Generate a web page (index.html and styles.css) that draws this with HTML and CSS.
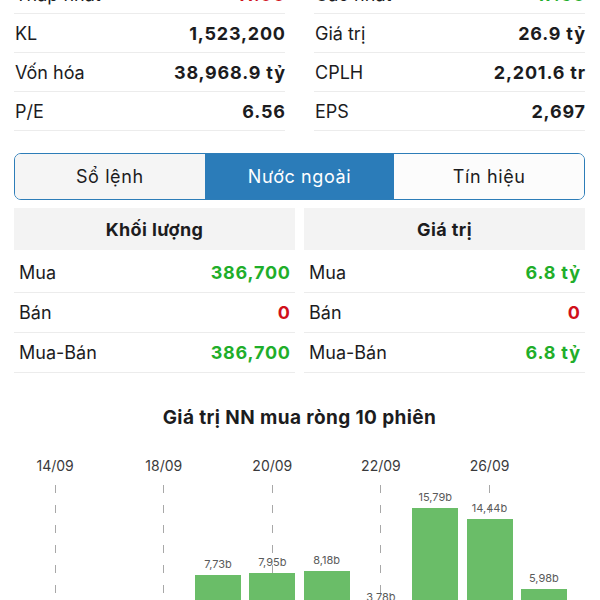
FILE: index.html
```html
<!DOCTYPE html>
<html lang="vi">
<head>
    <meta charset="UTF-8">
    <meta name="viewport" content="width=device-width, initial-scale=1.0">
    <title>Nước ngoài</title>
    <link rel="stylesheet" href="styles.css">
</head>
<body>
    <div class="page">
        <!-- Thống kê phiên -->
        <section class="stats">
            <div class="stats-col">
                <div class="row"><span class="label">Thấp nhất</span><span class="value down">11.90</span></div>
                <div class="row"><span class="label">KL</span><span class="value">1,523,200</span></div>
                <div class="row"><span class="label">Vốn hóa</span><span class="value">38,968.9 tỷ</span></div>
                <div class="row"><span class="label">P/E</span><span class="value">6.56</span></div>
            </div>
            <div class="stats-col">
                <div class="row"><span class="label">Cao nhất</span><span class="value up">17.50</span></div>
                <div class="row"><span class="label">Giá trị</span><span class="value">26.9 tỷ</span></div>
                <div class="row"><span class="label">CPLH</span><span class="value">2,201.6 tr</span></div>
                <div class="row"><span class="label">EPS</span><span class="value">2,697</span></div>
            </div>
        </section>

        <nav class="tabs">
            <a class="tab tab-first" href="#">Sổ lệnh</a>
            <a class="tab active" href="#">Nước ngoài</a>
            <a class="tab" href="#">Tín hiệu</a>
        </nav>

        <!-- Giao dịch nước ngoài -->
        <section class="foreign">
            <div class="foreign-col">
                <div class="foreign-head">Khối lượng</div>
                <div class="frow"><span class="label">Mua</span><span class="value up">386,700</span></div>
                <div class="frow"><span class="label">Bán</span><span class="value down">0</span></div>
                <div class="frow"><span class="label">Mua-Bán</span><span class="value up">386,700</span></div>
            </div>
            <div class="foreign-col">
                <div class="foreign-head">Giá trị</div>
                <div class="frow"><span class="label">Mua</span><span class="value up">6.8 tỷ</span></div>
                <div class="frow"><span class="label">Bán</span><span class="value down">0</span></div>
                <div class="frow"><span class="label">Mua-Bán</span><span class="value up">6.8 tỷ</span></div>
            </div>
        </section>

        <section class="chart">
            <h3 class="chart-title">Giá trị NN mua ròng 10 phiên</h3>
            <div class="chart-body">
                <div class="col"><div class="date">14/09</div><div class="plot lined"><span class="bar-label">1,05b</span><div class="bar" style="height: 9px"></div></div></div>
                <div class="col"><div class="date"></div><div class="plot"><span class="bar-label">0,82b</span><div class="bar" style="height: 7px"></div></div></div>
                <div class="col"><div class="date">18/09</div><div class="plot lined"><span class="bar-label">1,40b</span><div class="bar" style="height: 12px"></div></div></div>
                <div class="col"><div class="date"></div><div class="plot"><span class="bar-label">7,73b</span><div class="bar" style="height: 64px"></div></div></div>
                <div class="col"><div class="date">20/09</div><div class="plot lined"><span class="bar-label">7,95b</span><div class="bar" style="height: 66px"></div></div></div>
                <div class="col"><div class="date"></div><div class="plot"><span class="bar-label">8,18b</span><div class="bar" style="height: 68px"></div></div></div>
                <div class="col"><div class="date">22/09</div><div class="plot lined"><span class="bar-label">3,78b</span><div class="bar" style="height: 31px"></div></div></div>
                <div class="col"><div class="date"></div><div class="plot"><span class="bar-label">15,79b</span><div class="bar" style="height: 131px"></div></div></div>
                <div class="col"><div class="date">26/09</div><div class="plot lined"><span class="bar-label">14,44b</span><div class="bar" style="height: 120px"></div></div></div>
                <div class="col"><div class="date"></div><div class="plot"><span class="bar-label">5,98b</span><div class="bar" style="height: 50px"></div></div></div>
            </div>
        </section>
    </div>
</body>
</html>
```

FILE: styles.css
```css
body {
    margin: 0;
    background: #fff;
    color: #1c1c1e;
    font-family: 'Inter', 'Roboto', sans-serif;
    font-size: 18px;
}

.page {
    margin-top: -25px;
    padding: 0 15px 0 14px;
}

.up {
    color: #1fae2a;
}

.down {
    color: #d0101b;
}

/* stats table */
.stats {
    display: grid;
    grid-template-columns: 1fr 1fr;
    column-gap: 29px;
}

.row {
    display: flex;
    justify-content: space-between;
    align-items: center;
    height: 38px;
    border-bottom: 1px solid #ececec;
}

.label {
    padding-left: 1px;
}

.value {
    font-weight: 700;
    letter-spacing: 0.8px;
    margin-right: -0.8px;
}

.stats .value {
    color: #1c1c1e;
}

.stats .value.up {
    color: #1fae2a;
}

.stats .value.down {
    color: #d0101b;
}

/* tabs */
.tabs {
    display: flex;
    margin-top: 22px;
    height: 45px;
    border: 1px solid #2d7db8;
    border-radius: 7px;
    overflow: hidden;
}

.tab {
    flex: 1;
    display: flex;
    align-items: center;
    justify-content: center;
    color: #1c1c1e;
    text-decoration: none;
    letter-spacing: 0.6px;
    background: #fcfcfc;
}

.tab-first {
    background: #f5f5f5;
}

.tab.active {
    background: #2b7cb9;
    color: #fff;
}

/* foreign trading */
.foreign {
    display: grid;
    grid-template-columns: 1fr 1fr;
    column-gap: 9px;
    margin-top: 8px;
}

.foreign-head {
    height: 42px;
    display: flex;
    align-items: center;
    justify-content: center;
    background: #f3f3f3;
    font-weight: 700;
    letter-spacing: 0.4px;
}

.frow {
    display: flex;
    justify-content: space-between;
    align-items: center;
    height: 39px;
    padding: 0 5px 0 4px;
    border-bottom: 1px solid #ececec;
}

.foreign-head + .frow {
    margin-top: 3px;
}

/* chart */
.chart {
    padding: 0 14px 0 14px;
}

.chart-title {
    margin: 32px 0 0;
    height: 26px;
    line-height: 26px;
    text-align: center;
    font-size: 19px;
    font-weight: 700;
    letter-spacing: 0.4px;
}

.chart-body {
    display: flex;
    margin-top: 26px;
}

.col {
    flex: 1;
    display: flex;
    flex-direction: column;
    align-items: center;
}

.date {
    height: 18px;
    line-height: 18px;
    font-size: 14px;
    color: #3a3a3c;
}

.plot {
    align-self: stretch;
    height: 154px;
    margin-top: 10px;
    display: flex;
    flex-direction: column;
    justify-content: flex-end;
    align-items: center;
}

.lined {
    background-image: linear-gradient(to bottom, #a8a8a8 8px, transparent 8px);
    background-size: 1px 20px;
    background-repeat: repeat-y;
    background-position: center top;
}

.bar-label {
    font-size: 11px;
    color: #5a5a5a;
    line-height: 14px;
    margin-bottom: 4px;
}

.bar {
    width: 46px;
    background: #6abd68;
}
```
